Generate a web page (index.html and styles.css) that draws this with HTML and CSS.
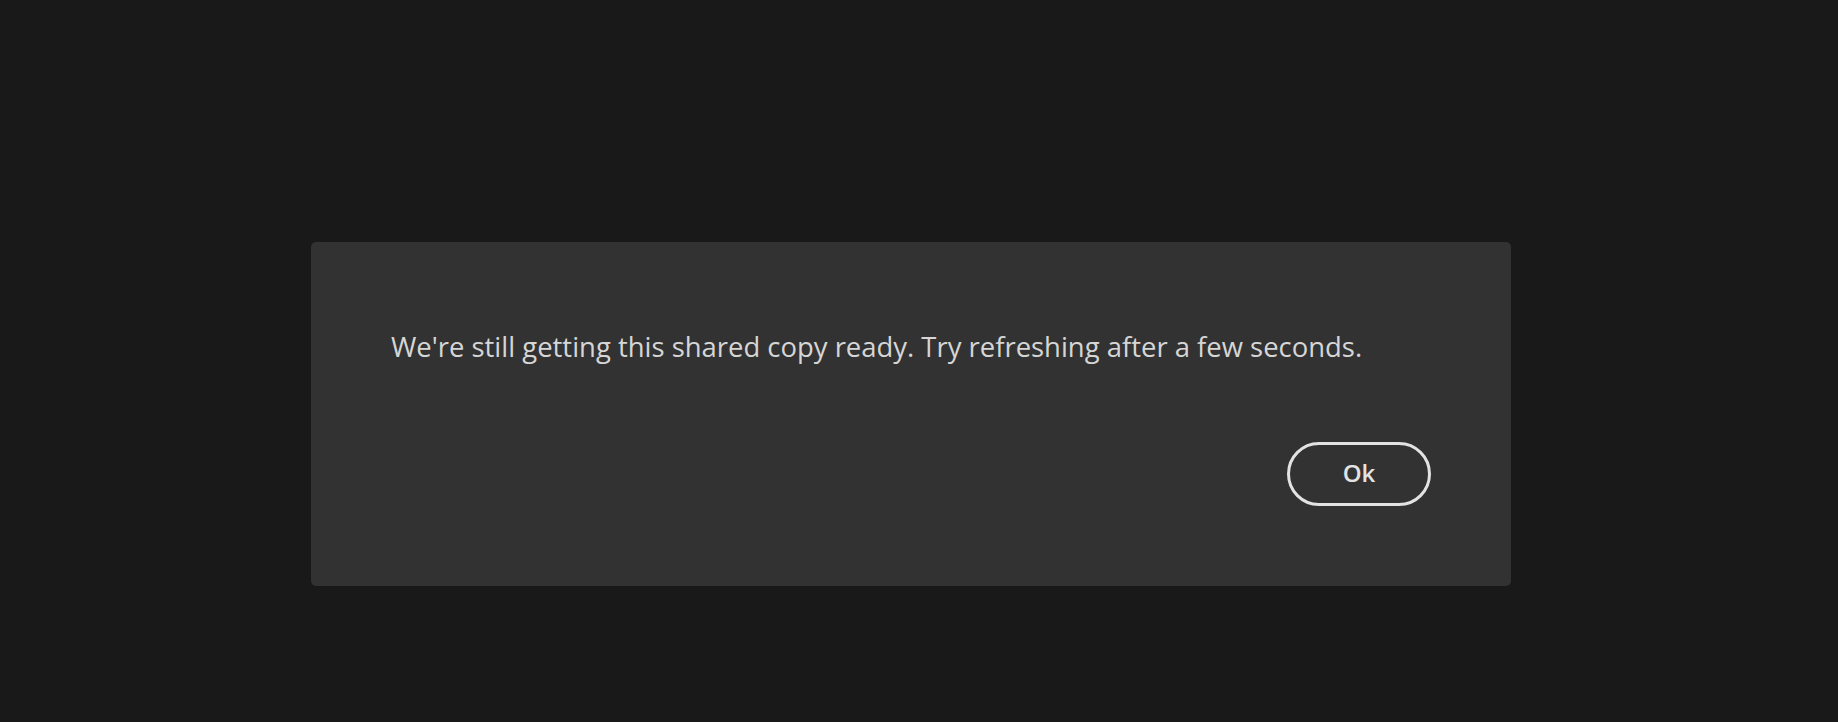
FILE: index.html
```html
<!DOCTYPE html>
<html lang="en">
<head>
<meta charset="utf-8">
<title>Shared copy</title>
<link rel="stylesheet" href="styles.css">
</head>
<body>
<div class="page">
  <section class="dialog" role="alertdialog">
    <p class="message">We're still getting this shared copy ready. Try refreshing after a few seconds.</p>
    <div class="actions">
      <button class="btn" type="button">Ok</button>
    </div>
  </section>
</div>
</body>
</html>
```
FILE: styles.css
```css
html, body {
  margin: 0;
  padding: 0;
  background: #191919;
  height: 100%;
}
body {
  font-family: "Open Sans", "Liberation Sans", sans-serif;
  overflow: hidden;
}
.page {
  padding: 242px 0 0 311px;
}
.dialog {
  box-sizing: border-box;
  width: 1200px;
  height: 344px;
  padding: 80px;
  background: #323232;
  border-radius: 5px;
  display: flex;
  flex-direction: column;
}
.message {
  margin: 0;
  font-size: 27.45px;
  line-height: 38px;
  padding-top: 6px;
  color: #d6d6d6;
}
.actions {
  margin-top: auto;
  display: flex;
  justify-content: flex-end;
}
.btn {
  box-sizing: border-box;
  width: 144px;
  height: 64px;
  border: 3px solid #e3e3e3;
  border-radius: 32px;
  background: transparent;
  color: #e3e3e3;
  font-family: inherit;
  font-size: 24px;
  font-weight: 600;
  padding: 0 0 3px;
  cursor: pointer;
}
```
